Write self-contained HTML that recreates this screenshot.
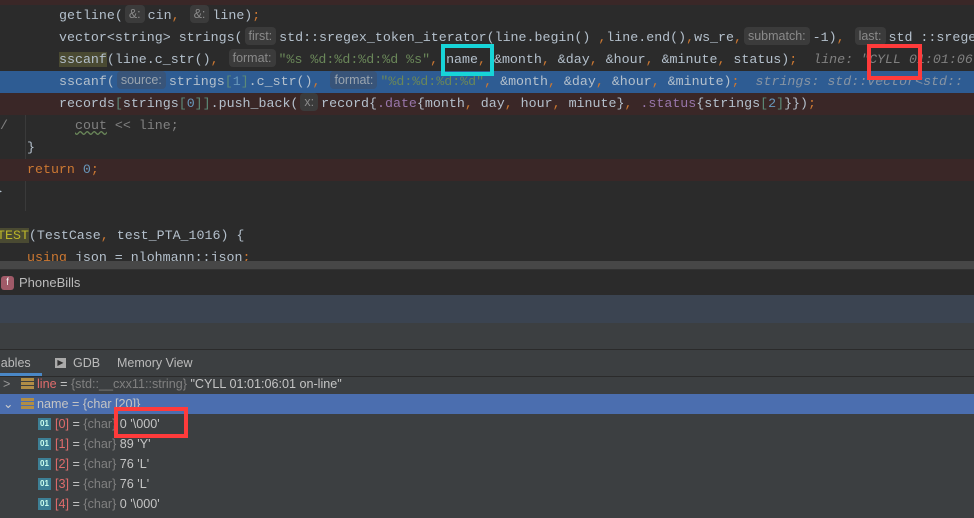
<!DOCTYPE html>
<html><head><meta charset="utf-8"><style>
*{margin:0;padding:0;box-sizing:border-box}
body{width:974px;height:518px;overflow:hidden;background:#2b2b2b;position:relative;font-family:"Liberation Mono",monospace;}
.ln{position:absolute;left:0;width:974px;height:22px;line-height:22px;font-size:13.3px;color:#b4c0cc;white-space:pre}
.t{position:absolute;top:0}
.h{display:inline-block;font-family:"Liberation Sans",sans-serif;font-size:12.5px;color:#8a8a8a;background:#3b3b3b;border-radius:4px;padding:0 4px;line-height:18px;margin:0 3px 0 2px;vertical-align:1px}
.hl .h{background:#385479;color:#9aa4ae}
.o{color:#cc7832}.s{color:#6a8759}.n{color:#6897bb}.p{color:#9876aa}.g{color:#808080;font-style:italic}.br{color:#5c8a78}
.red{background:#3a2727}
.hl{background:#2e5c93}
.box{position:absolute;border:4px solid #ff3b3b}
.ui{font-family:"Liberation Sans",sans-serif}
.row{position:absolute;left:0;width:974px;height:20px;line-height:20px;font-size:12.6px;color:#c4c4c4;font-family:"Liberation Sans",sans-serif;white-space:pre}
.gr{color:#808080}.rd{color:#e06c6c}
.ic{position:absolute;top:4px;width:13px;height:12px;background:#3d7f95;color:#cfe;font-size:8px;line-height:12px;text-align:center;font-weight:bold}
.st{position:absolute;top:4px;left:21px;width:13px;height:12px;background:repeating-linear-gradient(#b08d46 0 3px,#3c3f41 3px 4px)}
</style></head><body>
<div style="position:absolute;left:0;top:0;width:974px;height:5px;background:#3a2727"></div>
<div style="position:absolute;left:25px;top:71px;width:1px;height:140px;background:#3a3a3a"></div>
<div class="ln" style="top:5px"><span class="t" style="left:59px">getline(<span class="h">&amp;:</span>cin<span class="o">,</span> <span class="h">&amp;:</span>line)<span class="o">;</span></span></div>
<div class="ln" style="top:27px"><span class="t" style="left:59px">vector&lt;string&gt; strings(<span class="h">first:</span>std::sregex_token_iterator(line.begin() <span class="o">,</span>line.end()<span class="o">,</span>ws_re<span class="o">,</span><span class="h">submatch:</span>-1)<span class="o">,</span> <span class="h">last:</span>std ::sregex</span></div>
<div class="ln" style="top:49px"><span class="t" style="left:59px"><span style="background:#4a4a32">sscanf</span>(line.c_str()<span class="o">,</span> <span class="h">format:</span><span class="s">"%s %d:%d:%d:%d %s"</span><span class="o">,</span> name<span class="o">,</span> &amp;month<span class="o">,</span> &amp;day<span class="o">,</span> &amp;hour<span class="o">,</span> &amp;minute<span class="o">,</span> status)<span class="o">;</span>  <span class="g">line: "CYLL 01:01:06:01</span></span></div>
<div class="ln hl" style="top:71px"><span class="t" style="left:59px">sscanf(<span class="h">source:</span>strings<span class="br">[</span><span class="n">1</span><span class="br">]</span>.c_str()<span class="o">,</span> <span class="h">format:</span><span class="s">"%d:%d:%d:%d"</span><span class="o">,</span> &amp;month<span class="o">,</span> &amp;day<span class="o">,</span> &amp;hour<span class="o">,</span> &amp;minute)<span class="o">;</span>  <span class="g" style="color:#8794a3">strings: std::vector&lt;std::</span></span></div>
<div class="ln red" style="top:93px"><span class="t" style="left:59px">records<span class="br">[</span>strings<span class="br">[</span><span class="n">0</span><span class="br">]]</span>.push_back(<span class="h">x:</span>record{<span class="p">.date</span>{month<span class="o">,</span> day<span class="o">,</span> hour<span class="o">,</span> minute}<span class="o">,</span> <span class="p">.status</span>{strings<span class="br">[</span><span class="n">2</span><span class="br">]</span>}})<span class="o">;</span></span></div>
<div class="ln" style="top:115px"><span class="t" style="left:0;color:#808080">/</span><span class="t" style="left:75px;color:#808080"><span style="text-decoration:underline wavy #6a8759">cout</span> &lt;&lt; line;</span></div>
<div class="ln" style="top:137px"><span class="t" style="left:27px">}</span></div>
<div class="ln red" style="top:159px"><span class="t" style="left:27px"><span class="o">return</span> <span class="n">0</span><span class="o">;</span></span></div>
<div class="ln" style="top:181px"><span class="t" style="left:-5px">}</span></div>
<div class="ln" style="top:225px"><span class="t" style="left:-3px"><span style="background:#4a4a32;color:#bbb529">TEST</span>(TestCase<span class="o">,</span> test_PTA_1016) {</span></div>
<div class="ln" style="top:247px"><span class="t" style="left:27px"><span class="o">using</span> json = nlohmann::json<span class="o">;</span></span></div>
<div style="position:absolute;left:0;top:261px;width:974px;height:8px;background:#474747"></div>
<div class="ui" style="position:absolute;left:0;top:269px;width:974px;height:26px;background:#2b2b2b;border-top:1px solid #323232">
 <div style="position:absolute;left:1px;top:6px;width:13px;height:14px;background:#a05a68;border-radius:3px;color:#eee;font-size:10px;line-height:14px;text-align:center">f</div>
 <div style="position:absolute;left:19px;top:5px;font-size:13px;color:#bbbbbb">PhoneBills</div>
</div>
<div style="position:absolute;left:0;top:295px;width:974px;height:28px;background:#3b4451"></div>
<div style="position:absolute;left:0;top:323px;width:974px;height:195px;background:#3c3f41"></div>
<div style="position:absolute;left:0;top:349px;width:974px;height:1px;background:#2b2b2b"></div>
<div class="ui" style="position:absolute;left:0;top:350px;width:974px;height:26px;font-size:12.5px;color:#bbbbbb;line-height:26px">
 <span style="position:absolute;left:-2px">iables</span>
 <div style="position:absolute;left:0;top:23px;width:42px;height:3px;background:#4a88c7"></div>
 <span style="position:absolute;left:55px;top:8px;width:11px;height:10px;background:#aaa;color:#333;font-size:8px;line-height:10px;text-align:center">&#9654;</span>
 <span style="position:absolute;left:73px">GDB</span>
 <span style="position:absolute;left:117px">Memory View</span>
</div>
<div style="position:absolute;left:0;top:376px;width:974px;height:1px;background:#2b2b2b"></div>
<div class="row" style="top:374px"><span class="t" style="left:3px;color:#999">&gt;</span><span class="st"></span><span class="t" style="left:37px"><span class="rd">line</span> = <span class="gr">{std::__cxx11::string}</span> "CYLL 01:01:06:01 on-line"</span></div>
<div class="row" style="top:394px;background:#4b6eaf"><span class="t" style="left:3px;color:#ccc">&#8964;</span><span class="st" style="background:repeating-linear-gradient(#b08d46 0 3px,#4b6eaf 3px 4px)"></span><span class="t" style="left:37px">name = {char [20]}</span></div>
<div class="row" style="top:414px"><span class="ic" style="left:38px">01</span><span class="t" style="left:55px"><span class="rd">[0]</span> = <span class="gr">{char}</span> 0 '\000'</span></div>
<div class="row" style="top:434px"><span class="ic" style="left:38px">01</span><span class="t" style="left:55px"><span class="rd">[1]</span> = <span class="gr">{char}</span> 89 'Y'</span></div>
<div class="row" style="top:454px"><span class="ic" style="left:38px">01</span><span class="t" style="left:55px"><span class="rd">[2]</span> = <span class="gr">{char}</span> 76 'L'</span></div>
<div class="row" style="top:474px"><span class="ic" style="left:38px">01</span><span class="t" style="left:55px"><span class="rd">[3]</span> = <span class="gr">{char}</span> 76 'L'</span></div>
<div class="row" style="top:494px"><span class="ic" style="left:38px">01</span><span class="t" style="left:55px"><span class="rd">[4]</span> = <span class="gr">{char}</span> 0 '\000'</span></div>
<div class="box" style="left:441px;top:44px;width:53px;height:32px;border-color:#17d4d8"></div>
<div class="box" style="left:867px;top:44px;width:55px;height:36px"></div>
<div class="box" style="left:114px;top:407px;width:74px;height:31px"></div>
</body></html>
